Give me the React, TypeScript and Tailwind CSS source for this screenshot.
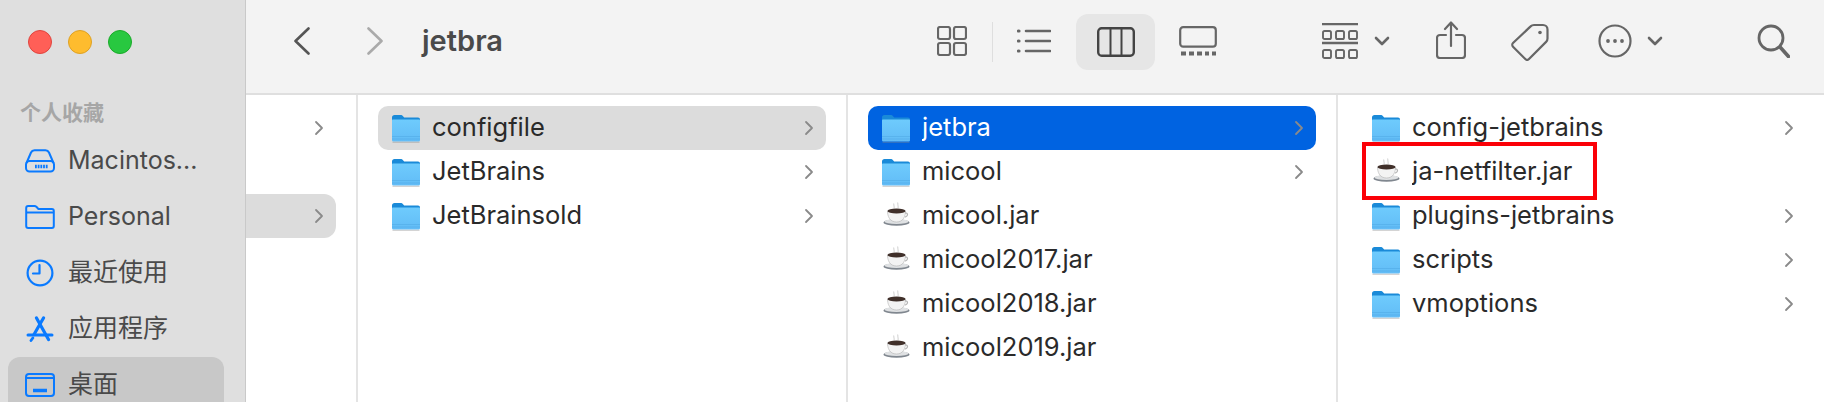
import React from 'react';

const uiFont = 'font-["Inter","Noto_Sans_CJK_SC",sans-serif]';

const Chevron = ({ className = '' }: { className?: string }) => (
  <svg width="10" height="16" viewBox="0 0 10 16" fill="none" className={`shrink-0 ${className}`}>
    <path d="M2 2l6 6-6 6" stroke="#8a8a8a" strokeWidth="1.8" strokeLinecap="round" strokeLinejoin="round" />
  </svg>
);

const Folder = () => (
  <svg width="30" height="30" viewBox="0 0 30 30" className="shrink-0">
    <defs>
      <linearGradient id="folderBody" x1="0" y1="0" x2="0" y2="1">
        <stop offset="0" stopColor="#6ecbfd" />
        <stop offset="1" stopColor="#62bcf6" />
      </linearGradient>
    </defs>
    <path d="M1 4.500C1 3 2 2 3.500 2h6.300c.9 0 1.400.3 2 1l1.400 1.600H27c1.200 0 2 .8 2 2V12H1z" fill="#1a8ad8" />
    <path d="M1 7.500c0-.6.4-1 1-1h26c.6 0 1 .4 1 1V27c0 1-.7 1.600-1.600 1.600H2.600C1.700 28.600 1 28 1 27z" fill="url(#folderBody)" />
    <path d="M1 23.500h28M1 26h28" stroke="#4ea6e2" strokeWidth=".7" opacity=".7" />
    <path d="M1.500 29.300h27" stroke="#8a8a8a" strokeWidth="1" opacity=".45" />
  </svg>
);

const Coffee = () => (
  <svg width="30" height="30" viewBox="0 0 30 30" className="shrink-0">
    <path d="M13 2.500c-1.200 1.500 1 2.500 0 5M17 1.500c-1.200 1.800 1 3 0 6" stroke="#dedede" strokeWidth="1.400" fill="none" />
    <ellipse cx="15.500" cy="21.500" rx="13" ry="3.300" fill="#80878f" />
    <ellipse cx="15.500" cy="20.500" rx="12" ry="2.500" fill="#dfe1e3" />
    <path d="M6.500 10c0 5 2 11 9 11s9-6 9-11z" fill="#f3f3f3" stroke="#b4b4b4" strokeWidth=".6" />
    <path d="M24 12c3-.6 3.600 2.800.2 4.200" stroke="#b4b4b4" strokeWidth="1.300" fill="none" />
    <ellipse cx="15.500" cy="10" rx="9" ry="2.500" fill="#40302a" />
  </svg>
);

const ic = { stroke: '#666', strokeWidth: 2.2, fill: 'none', strokeLinecap: 'round' as const, strokeLinejoin: 'round' as const, className: 'shrink-0' };

const GridIcon = () => (
  <svg width="30" height="30" viewBox="0 0 30 30" {...ic}>
    <rect x="1" y="1" width="12" height="12" rx="2" />
    <rect x="17" y="1" width="12" height="12" rx="2" />
    <rect x="1" y="17" width="12" height="12" rx="2" />
    <rect x="17" y="17" width="12" height="12" rx="2" />
  </svg>
);

const ListIcon = () => (
  <svg width="34" height="26" viewBox="0 0 34 26" {...ic} strokeWidth={2.6}>
    <path d="M9 3h24M9 13h24M9 23h24" />
    <path d="M1.500 3h.5M1.500 13h.5M1.500 23h.5" strokeWidth={3.2} />
  </svg>
);

const ColumnsIcon = () => (
  <svg width="38" height="30" viewBox="0 0 38 30" {...ic} stroke="#444" strokeWidth={2.4}>
    <rect x="1.200" y="1.200" width="35.600" height="27.600" rx="3.500" />
    <path d="M13.500 1.200v27.600M24.500 1.200v27.600" strokeWidth={2} />
  </svg>
);

const GalleryIcon = () => (
  <svg width="38" height="30" viewBox="0 0 38 30" {...ic}>
    <rect x="1.200" y="1.200" width="35.600" height="19.500" rx="3" />
    <path d="M2 27.500h5M10 27.500h5M18 27.500h5M26 27.500h4M33 27.500h4" strokeWidth={4} strokeLinecap="butt" />
  </svg>
);

const GroupIcon = () => (
  <svg width="36" height="36" viewBox="0 0 36 36" {...ic} strokeWidth={1.9}>
    <path d="M0 1h36M0 20h36" strokeWidth={2.4} strokeLinecap="butt" />
    <rect x="1" y="8" width="8" height="8" rx="1.600" />
    <rect x="14" y="8" width="8" height="8" rx="1.600" />
    <rect x="27" y="8" width="8" height="8" rx="1.600" />
    <rect x="1" y="27" width="8" height="8" rx="1.600" />
    <rect x="14" y="27" width="8" height="8" rx="1.600" />
    <rect x="27" y="27" width="8" height="8" rx="1.600" />
  </svg>
);

const SmallDown = () => (
  <svg width="16" height="10" viewBox="0 0 16 10" {...ic} strokeWidth={2.600}>
    <path d="M2 2l6 6 6-6" />
  </svg>
);

const ShareIcon = () => (
  <svg width="30" height="38" viewBox="0 0 30 38" {...ic}>
    <path d="M10 14H4c-1.800 0-3 1.200-3 3v17c0 1.800 1.200 3 3 3h22c1.800 0 3-1.200 3-3V17c0-1.800-1.200-3-3-3h-6" />
    <path d="M15 25V2M9 8l6-6.500L21 8" />
  </svg>
);

const TagIcon = () => (
  <svg width="38" height="38" viewBox="0 0 38 38" {...ic}>
    <path d="M23 2h9c2.500 0 4.500 2 4.500 4.500v9c0 1.300-.5 2.500-1.400 3.400L18 36c-1 1-2.700 1-3.700 0L2 23.700c-1-1-1-2.700 0-3.700L19.600 3.400C20.500 2.500 21.700 2 23 2z" />
    <circle cx="29" cy="9.500" r="1.800" fill="#666" stroke="none" />
  </svg>
);

const MoreIcon = () => (
  <svg width="34" height="34" viewBox="0 0 34 34" {...ic}>
    <circle cx="17" cy="17" r="15.500" />
    <circle cx="10" cy="17" r="1.900" fill="#666" stroke="none" />
    <circle cx="17" cy="17" r="1.900" fill="#666" stroke="none" />
    <circle cx="24" cy="17" r="1.900" fill="#666" stroke="none" />
  </svg>
);

const SearchIcon = () => (
  <svg width="33" height="34" viewBox="0 0 33 34" {...ic} strokeWidth={2.800}>
    <circle cx="14" cy="14" r="12" />
    <path d="M23 23l8.500 9.500" strokeWidth={3.600} />
  </svg>
);

const blue = '#0a7aff';
const DriveIcon = () => (
  <svg width="30" height="24" viewBox="0 0 30 24" fill="none" stroke={blue} strokeWidth="2">
    <path d="M1.500 14L6 3.500C6.700 2 7.800 1.200 9.500 1.200h11c1.700 0 2.800.8 3.500 2.300L28.500 14" />
    <rect x="1" y="12" width="28" height="10.500" rx="3.500" />
    <path d="M10 17.500h13" strokeWidth="3.500" strokeDasharray="1.800 .9" />
  </svg>
);
const SideFolderIcon = () => (
  <svg width="30" height="24" viewBox="0 0 30 24" fill="none" stroke={blue} strokeWidth="2">
    <path d="M1.200 5V3c0-1.200.8-2 2-2h6.300c.8 0 1.300.3 1.900.8l2 2.200h13.400c1.300 0 2 .8 2 2v15c0 1.300-.7 2-2 2H3.200c-1.200 0-2-.7-2-2z" />
    <path d="M1.200 7.500h27.600" />
  </svg>
);
const ClockIcon = () => (
  <svg width="28" height="28" viewBox="0 0 28 28" fill="none" stroke={blue} strokeWidth="2.200">
    <circle cx="14" cy="14" r="12.400" />
    <path d="M13.500 6v8.500H7" strokeLinecap="round" strokeLinejoin="round" />
  </svg>
);
const AppsIcon = () => (
  <svg width="28" height="26" viewBox="0 0 28 26" fill="none" stroke={blue} strokeLinecap="round">
    <path d="M2 19h24" strokeWidth="3" />
    <path d="M10.500 2l12 21.500" strokeWidth="3.200" />
    <path d="M17.500 2L8 18.500" strokeWidth="3.200" />
    <path d="M6.800 22L5 24.500" strokeWidth="2.800" />
  </svg>
);
const DesktopIcon = () => (
  <svg width="30" height="24" viewBox="0 0 30 24" fill="none" stroke={blue} strokeWidth="2">
    <rect x="1" y="1" width="28" height="22" rx="3" />
    <path d="M1 5h28" />
    <path d="M8 17.500h14" strokeWidth="3.500" />
  </svg>
);

const favorites = [
  { label: 'Macintos...', icon: <DriveIcon /> },
  { label: 'Personal', icon: <SideFolderIcon /> },
  { label: '最近使用', icon: <ClockIcon /> },
  { label: '应用程序', icon: <AppsIcon /> },
  { label: '桌面', icon: <DesktopIcon />, active: true },
];

type Entry = { name: string; jar?: boolean; state?: 'gray' | 'blue' };

const FileRow = ({ name, jar, state }: Entry) => (
  <div
    className={`flex h-[44px] items-center rounded-[10px] pl-[13px] pr-[12px] ${
      state === 'gray' ? 'bg-[#dcdcdc]' : state === 'blue' ? 'bg-[#0063e1]' : ''
    }`}
  >
    {jar ? <Coffee /> : <Folder />}
    <span className={`ml-[11px] flex-1 truncate pb-[2px] text-[25.5px] ${state === 'blue' ? 'text-white' : 'text-[#2a2a2a]'}`}>
      {name}
    </span>
    {!jar && <Chevron />}
  </div>
);

const Column = ({ entries, className = '' }: { entries: Entry[]; className?: string }) => (
  <div className={`flex flex-col border-l-2 border-[#e4e4e4] pt-[11px] pl-5 ${className}`}>
    {entries.map((e) => (
      <FileRow key={e.name} {...e} />
    ))}
  </div>
);

export default function App() {
  return (
    <div className={`flex h-[402px] w-[1824px] overflow-hidden bg-white ${uiFont}`}>
      {/* Sidebar */}
      <aside className="w-[246px] shrink-0 border-r border-[#c9c9c9] bg-[#dfdfdf]">
        <div className="flex gap-4 pl-[28px] pt-[30px]">
          <span className="h-6 w-6 rounded-full border border-[#e0443e] bg-[#ff5f57]" />
          <span className="h-6 w-6 rounded-full border border-[#dea123] bg-[#febc2e]" />
          <span className="h-6 w-6 rounded-full border border-[#1aab29] bg-[#28c840]" />
        </div>
        <div className="mt-[45px] pl-5 text-[21px] leading-[28px] font-semibold text-[#a6a6a6]">个人收藏</div>
        <div className="mt-[6px] flex flex-col">
          {favorites.map((f) => (
            <div
              key={f.label}
              className={`ml-2 mr-[21px] flex h-[56px] items-center rounded-xl pl-[17px] ${f.active ? 'bg-[#c8c8c8]' : ''}`}
            >
              <span className="flex w-[30px] shrink-0 justify-center">{f.icon}</span>
              <span className="ml-[13px] text-[25px] text-[#4a4a4a]">{f.label}</span>
            </div>
          ))}
        </div>
      </aside>

      <main className="flex min-w-0 flex-1 flex-col">
        {/* Toolbar */}
        <header className="flex h-[95px] shrink-0 items-start border-b-2 border-[#dfdfdf] bg-[#f3f3f3]">
          <div className="flex shrink-0 items-center pl-[47px] pt-[27px]">
            <svg width="18" height="28" viewBox="0 0 18 28" fill="none" stroke="#555" strokeWidth="2.600" strokeLinecap="round" strokeLinejoin="round">
              <path d="M15.500 1.500L2.500 14l13 12.500" />
            </svg>
            <svg width="18" height="28" viewBox="0 0 18 28" fill="none" stroke="#aaa" strokeWidth="2.600" strokeLinecap="round" strokeLinejoin="round" className="ml-[55px]">
              <path d="M2.500 1.500L15.500 14l-13 12.500" />
            </svg>
            <span className="ml-[38px] w-[130px] text-[29px] leading-[28px] font-semibold text-[#4a4a4a]">jetbra</span>
          </div>
          <div className="ml-[385px] shrink-0 pt-[26px]"><GridIcon /></div>
          <div className="ml-[25px] mt-[22px] h-[40px] w-px shrink-0 bg-[#dedede]" />
          <div className="ml-[24px] shrink-0 pt-[28px]"><ListIcon /></div>
          <div className="ml-[25px] mt-[14px] flex h-[56px] w-[79px] shrink-0 items-center justify-center rounded-xl bg-[#e6e6e6]">
            <ColumnsIcon />
          </div>
          <div className="ml-[24px] shrink-0 pt-[26px]"><GalleryIcon /></div>
          <div className="ml-[105px] flex shrink-0 items-center gap-4 pt-[23px]">
            <GroupIcon />
            <SmallDown />
          </div>
          <div className="ml-[46px] shrink-0 pt-[21px]"><ShareIcon /></div>
          <div className="ml-[45px] shrink-0 pt-[23px]"><TagIcon /></div>
          <div className="ml-[49px] flex shrink-0 items-center gap-[15px] pt-[24px]">
            <MoreIcon />
            <SmallDown />
          </div>
          <div className="ml-[94px] shrink-0 pt-[24px]"><SearchIcon /></div>
        </header>

        {/* Columns */}
        <div className="relative flex min-h-0 flex-1">
          <div className="flex w-[110px] shrink-0 flex-col pt-[11px]">
            <div className="flex h-[44px] w-[90px] items-center justify-end pr-3">
              <Chevron />
            </div>
            <div className="h-[44px]" />
            <div className="flex h-[44px] w-[90px] items-center justify-end rounded-r-xl bg-[#dcdcdc] pr-3">
              <Chevron />
            </div>
          </div>
          <Column
            className="w-[490px] shrink-0 pr-5"
            entries={[{ name: 'configfile', state: 'gray' }, { name: 'JetBrains' }, { name: 'JetBrainsold' }]}
          />
          <Column
            className="w-[490px] shrink-0 pr-5"
            entries={[
              { name: 'jetbra', state: 'blue' },
              { name: 'micool' },
              { name: 'micool.jar', jar: true },
              { name: 'micool2017.jar', jar: true },
              { name: 'micool2018.jar', jar: true },
              { name: 'micool2019.jar', jar: true },
            ]}
          />
          <Column
            className="flex-1 pr-[18px]"
            entries={[
              { name: 'config-jetbrains' },
              { name: 'ja-netfilter.jar', jar: true },
              { name: 'plugins-jetbrains' },
              { name: 'scripts' },
              { name: 'vmoptions' },
            ]}
          />
          {/* red annotation box */}
          <div className="absolute left-[1116px] top-[47px] h-[58px] w-[235px] border-[4px] border-[#fb0007]" />
        </div>
      </main>
    </div>
  );
}
